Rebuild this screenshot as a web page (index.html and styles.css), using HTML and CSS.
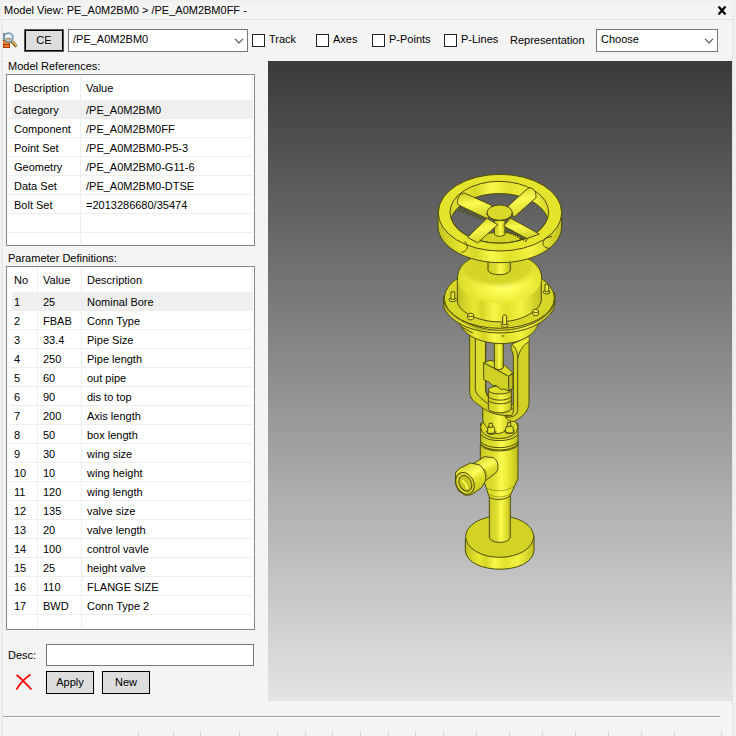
FILE: index.html
```html
<!DOCTYPE html>
<html lang="en">
<head>
<meta charset="utf-8">
<title>Model View</title>
<link rel="stylesheet" href="styles.css">
</head>
<body>
<div class="window">
  <header class="titlebar">
    <span>Model View: PE_A0M2BM0 &gt; /PE_A0M2BM0FF -</span>
    <button class="close" type="button" aria-label="Close">
      <svg width="10" height="9" viewBox="0 0 10 9"><path d="M1.5 .5 8.5 8.5M8.5 .5 1.5 8.5" stroke="#000" stroke-width="2.2"/></svg>
    </button>
  </header>

  <div class="toolbar">
    <svg class="find" width="15" height="18" viewBox="0 0 15 18">
      <path d="M0 8h7v8H0z" fill="#a83a08"/><path d="M0 9h6v3H0zM1 13h5v2H1z" fill="#f0801e"/><path d="M0 1h4v7H0z" fill="#8f8e88"/>
      <path d="m8.500 9 5 5.500" stroke="#6b501c" stroke-width="3.200"/><path d="m9 9 4.500 5" stroke="#e8c05a" stroke-width="1.600"/>
      <circle cx="5.500" cy="5.500" r="4.500" fill="#d3e6f0" stroke="#6f93b0" stroke-width="1.400"/><path d="M2 6h7l-1 2.500H3z" fill="#b9a48b"/><path d="M3 3h4v2H3z" fill="#fff"/>
    </svg>
    <button class="btn ce" type="button">CE</button>
    <span class="drop element"><select aria-label="Element"><option>/PE_A0M2BM0</option></select><svg width="10" height="6" viewBox="0 0 10 6"><path d="m1 .8 4 4 4-4" fill="none" stroke="#555" stroke-width="1.200"/></svg></span>
    <label class="check track"><input type="checkbox"><span>Track</span></label>
    <label class="check axes"><input type="checkbox"><span>Axes</span></label>
    <label class="check points"><input type="checkbox"><span>P-Points</span></label>
    <label class="check lines"><input type="checkbox"><span>P-Lines</span></label>
    <label class="rep" for="representation">Representation</label>
    <span class="drop choose"><select id="representation"><option>Choose</option></select><svg width="10" height="6" viewBox="0 0 10 6"><path d="m1 .8 4 4 4-4" fill="none" stroke="#555" stroke-width="1.200"/></svg></span>
  </div>

  <main class="content">
    <section class="side">
      <h2 id="refs">Model References:</h2>
      <div class="box">
        <table class="refs" aria-labelledby="refs">
          <thead><tr><th>Description</th><th>Value</th></tr></thead>
          <tbody>
            <tr class="selected"><td>Category</td><td>/PE_A0M2BM0</td></tr>
            <tr><td>Component</td><td>/PE_A0M2BM0FF</td></tr>
            <tr><td>Point Set</td><td>/PE_A0M2BM0-P5-3</td></tr>
            <tr><td>Geometry</td><td>/PE_A0M2BM0-G11-6</td></tr>
            <tr><td>Data Set</td><td>/PE_A0M2BM0-DTSE</td></tr>
            <tr><td>Bolt Set</td><td>=2013286680/35474</td></tr>
            <tr><td></td><td></td></tr>
            <tr class="rest"><td></td><td></td></tr>
          </tbody>
        </table>
      </div>
      <h2 id="params" class="second">Parameter Definitions:</h2>
      <div class="box">
        <table class="params" aria-labelledby="params">
          <thead><tr><th>No</th><th>Value</th><th>Description</th></tr></thead>
          <tbody>
            <tr class="selected"><td>1</td><td>25</td><td>Nominal Bore</td></tr>
            <tr><td>2</td><td>FBAB</td><td>Conn Type</td></tr>
            <tr><td>3</td><td>33.4</td><td>Pipe Size</td></tr>
            <tr><td>4</td><td>250</td><td>Pipe length</td></tr>
            <tr><td>5</td><td>60</td><td>out pipe</td></tr>
            <tr><td>6</td><td>90</td><td>dis to top</td></tr>
            <tr><td>7</td><td>200</td><td>Axis length</td></tr>
            <tr><td>8</td><td>50</td><td>box length</td></tr>
            <tr><td>9</td><td>30</td><td>wing size</td></tr>
            <tr><td>10</td><td>10</td><td>wing height</td></tr>
            <tr><td>11</td><td>120</td><td>wing length</td></tr>
            <tr><td>12</td><td>135</td><td>valve size</td></tr>
            <tr><td>13</td><td>20</td><td>valve length</td></tr>
            <tr><td>14</td><td>100</td><td>control vavle</td></tr>
            <tr><td>15</td><td>25</td><td>height valve</td></tr>
            <tr><td>16</td><td>110</td><td>FLANGE SIZE</td></tr>
            <tr><td>17</td><td>BWD</td><td>Conn Type 2</td></tr>
            <tr class="rest last"><td></td><td></td><td></td></tr>
          </tbody>
        </table>
      </div>
      <form class="edit">
        <label for="desc">Desc:</label>
        <input id="desc" type="text">
        <button class="delete" type="button" aria-label="Delete"><svg width="18" height="18" viewBox="0 0 18 18"><path d="M1.500 1C6 4 10 9 16.500 15.500M15.500 .5C11 3.500 5 9.500 1.500 15.500" fill="none" stroke="#f00" stroke-width="1.700"/></svg></button>
        <div class="actions"><button class="btn" type="button">Apply</button><button class="btn" type="button">New</button></div>
      </form>
    </section>

    <section class="viewer" aria-label="3D model">
      <svg class="model" viewBox="0 0 464 640" role="img" aria-label="Control valve with handwheel">
        <defs>
          <linearGradient id="cyl"><stop offset="0" stop-color="#c4c422"/><stop offset=".14" stop-color="#d6d628"/><stop offset=".34" stop-color="#dcdc2c"/><stop offset=".56" stop-color="#fbfb50"/><stop offset=".78" stop-color="#e1e12c"/><stop offset="1" stop-color="#c0c020"/></linearGradient>
          <linearGradient id="wide"><stop offset="0" stop-color="#c2c221"/><stop offset=".2" stop-color="#e8e82f"/><stop offset=".3" stop-color="#d6d627"/><stop offset=".43" stop-color="#f8f848"/><stop offset=".58" stop-color="#e2e22c"/><stop offset=".76" stop-color="#f2f240"/><stop offset="1" stop-color="#c2c221"/></linearGradient>
          <linearGradient id="nozzle" x1=".2" y1="0" x2=".7" y2="1"><stop offset="0" stop-color="#c8c823"/><stop offset=".4" stop-color="#ffff5c"/><stop offset=".6" stop-color="#e0e02b"/><stop offset="1" stop-color="#c0c020"/></linearGradient>
          <linearGradient id="arm" x1=".4" y1="0" x2=".6" y2="1"><stop offset="0" stop-color="#d2d226"/><stop offset=".4" stop-color="#fbfb50"/><stop offset="1" stop-color="#cccc24"/></linearGradient>
          <radialGradient id="dome" cx=".55" cy=".62" r=".62"><stop offset="0" stop-color="#ffff90"/><stop offset=".25" stop-color="#fcfc58"/><stop offset=".6" stop-color="#ebeb36"/><stop offset="1" stop-color="#d4d427"/></radialGradient>
          <radialGradient id="domeTop" cx=".5" cy=".35" r=".62"><stop offset="0" stop-color="#d2d226"/><stop offset=".7" stop-color="#d6d628"/><stop offset="1" stop-color="#f2f240" stop-opacity="0"/></radialGradient>
        </defs>

        <!-- base flange, pipe, body and side nozzle -->
        <g class="part" transform="translate(177 359) scale(.3333)">
          <path d="M61 355v38c8 72 197 74 206 0v-46z" fill="url(#wide)"/>
          <ellipse cx="164" cy="350" rx="102" ry="62" fill="#d3d326"/>
          <path d="M133 223v130c7 19 56 19 63 0V223z" fill="url(#cyl)"/>
          <path d="M106 72v79l27 81c18 10 47 8 62-4l24-52V62z" fill="url(#cyl)"/>
          <path d="M124 204c25 12 60 12 86-7M133 223c18 12 47 10 62-1" class="thin"/>
          <path d="m84 132 34-22 27 3c12 7 16 22 13 37l-6 9-36 28z" fill="url(#nozzle)"/>
          <path d="m98 138 22 12 8 22" class="thin"/>
          <path d="m32 158 10-12 34-17 26 5c14 9 22 27 20 48l-13 22-30 20-18 2-20-13-10-22z" fill="url(#nozzle)"/>
          <ellipse cx="60" cy="190" rx="26" ry="34" transform="rotate(-27 60 190)" fill="#e0e02b"/>
          <ellipse cx="61" cy="190" rx="18" ry="25" transform="rotate(-27 61 190)" fill="#c4c422"/>
          <path d="M51 181c8 6 14 15 16 26" stroke="#f6f650" stroke-width="6" fill="none"/>
          <path d="M107 10v65c16 24 95 24 112 0V10z" fill="url(#cyl)"/>
          <path d="M107 43c18 25 94 25 112 0M107 65c18 24 94 24 112 0M107 72c18 24 94 24 112 0" class="line"/>
          <ellipse cx="163" cy="22" rx="56" ry="34" fill="#d8d829"/>
        </g>

        <!-- yoke, stem, clamp block and gland -->
        <g class="part" transform="translate(177 269) scale(.3333)">
          <path d="M113 230v36c0 20 15 22 20 39 13 8 35 8 48-3 2-20 20-22 19-38v-34z" fill="url(#cyl)"/>
          <path d="M74 15v173c3 26 23 32 42 48 31 21 63 22 100 20l5-38c-48 14-77-1-94-23-4-9-5-13-5-22V35z" fill="#d2d226"/>
          <path d="M94 28v155l24 21V36z" fill="#dcdc2a" stroke="none"/>
          <path d="M122 35v135c0 18 3 27 15 38M91 25v154c2 14 18 28 38 42 20 16 45 19 74 15" class="line"/>
          <path d="M130 178v60c13 14 54 14 69 0v-60z" fill="url(#cyl)"/>
          <path d="M130 200c12 14 58 14 69 0M130 211c12 14 58 14 69 0" class="line"/>
          <ellipse cx="164" cy="180" rx="34" ry="12" fill="#dede2b"/>
          <path d="M148 35v78c5 8 21 8 27 0V30z" fill="url(#cyl)"/>
          <path d="m116 98 19-7 13 3v19c5 8 21 8 27 0v-11l28 26-12 11z" fill="#dcdc2a"/>
          <path d="m116 98 75 41v44l-14-6-8 2-17-13-9 1-10-10-17-8z" fill="#d0d025"/>
          <path d="m191 139 13-8v43l-13 9z" fill="#bdbd20"/>
          <path d="M201 43c12-4 35-16 51-22v204c-7 27-28 40-43 49-15 2-24-5-29-15 17-2 25-1 25-18V84c0-24-13-28-4-41z" fill="#d0d025"/>
          <path d="m204 43 47-23v16c-18 11-29 29-32 48-4-12-6-28-15-41z" fill="#ebeb36" stroke="none"/>
          <path d="M201 43c12 10 17 24 17 44v152c0 15-11 23-35 23M252 35c-18 10-30 28-33 49" class="line"/>
          <g fill="#e7e730"><path d="m128 296 4-8h13l4 8v14h-21zM182 295l4-8h13l6 8v14h-23z"/><path d="M132 292v-12h10v12zM188 290v-12h9v12z"/></g>
          <path d="M123 303c5 14 30 14 30 0M178 301c4 13 29 13 30 0" class="line"/>
        </g>

        <!-- actuator housing -->
        <g class="part" transform="translate(157 189) scale(.3333)">
          <path d="M104 220c15 38 62 59 124 61 61 0 104-29 112-60l5-31H104z" fill="url(#wide)"/>
          <path d="M56 138v30c4 23 33 47 64 61 83 34 198 26 254-35 10-10 16-22 16-41v-23z" fill="url(#wide)"/>
          <path d="M57 155c10 37 60 64 103 76 71 22 149 4 194-28 18-13 33-31 35-51" class="line"/>
          <path d="M60 160c18 45 72 72 121 80 75 10 148-15 184-47" class="thin"/>
          <ellipse cx="223" cy="144" rx="165" ry="91" fill="#d7d728"/>
          <path d="M97 83v72c2 16 18 29 36 40 56 28 128 27 178-1 22-12 36-26 38-43V80z" fill="url(#wide)"/>
          <path d="M98 86c0-42 45-76 125-78 79 0 126 33 126 76 0 43-52 74-126 75-73-1-125-30-125-73z" fill="url(#dome)" stroke="none"/>
          <ellipse cx="215" cy="66" rx="112" ry="56" fill="url(#domeTop)" stroke="none"/>
          <path d="M97 90c-2-48 42-80 126-82 79 1 130 35 127 78" class="line"/>
          <g fill="#eded37">
            <ellipse cx="83" cy="149" rx="11" ry="6"/><path d="M78 126h11v22H78z"/>
            <ellipse cx="365" cy="126" rx="10" ry="6"/><path d="M360 103h11v22h-11z"/>
            <ellipse cx="239" cy="226" rx="11" ry="6"/><path d="M233 198c2-4 10-4 12 0v26h-12z"/>
            <path d="M128 194c3-6 15-6 18 0v12c-3 5-15 5-18 0zM323 182c3-6 15-6 18 0v11c-3 5-15 5-18 0z"/>
          </g>
          <path d="M128 196c3 5 15 5 18 0M323 184c3 5 15 5 18 0M230 258h8M110 231l33 18" class="line"/>
          <path d="M189 32v30c8 16 58 16 67 0V32z" fill="url(#cyl)"/>
        </g>

        <!-- handwheel -->
        <g class="part" transform="translate(157 104) scale(.3333)">
          <path d="M162 218c22-22 102-22 125 0l-6 30H170z" fill="#d3d326"/>
          <path d="M208 165v43c6 8 25 8 32 0v-43z" fill="url(#cyl)"/>
          <path fill-rule="evenodd" d="M39 145c3-70 87-116 186-117 101 1 183 48 185 117v41c-3 65-90 107-185 107S42 248 39 187zM78 160a148 93 0 0 0 290 0 148 93 0 0 0-290 0z" fill="url(#wide)"/>
          <path fill-rule="evenodd" d="M40 143a185 115 0 1 1 370 0 185 115 0 0 1-370 0zM75 142a148 93 0 1 0 296 0 148 93 0 0 0-296 0z" fill="#e4e42d"/>
          <path d="M109 262c20-3 24-18 10-33M375 251c-20-3-25-14-19-23 3-9 14-11 25-14" class="line"/>
          <path d="m104 130 80 32M242 190l66 34" class="teeth"/>
          <path d="M99 119c-5-16 3-34 19-35l82 37-12 41z" fill="url(#arm)"/>
          <path d="m249 124 59-54c10-5 27 3 25 28l-66 59z" fill="url(#arm)"/>
          <path d="m186 160 32 19-60 55-30-17z" fill="url(#arm)"/>
          <path d="m256 159 87 48-37 14-70-38z" fill="url(#arm)"/>
          <ellipse cx="224" cy="143" rx="38" ry="23" fill="#d8d829"/>
          <path d="M186 143c0 13 16 24 38 24s38-11 38-24" class="line"/>
        </g>
      </svg>
    </section>
  </main>

  <footer class="status">
    <span></span><span></span><span></span><span></span><span></span><span></span><span></span><span></span><span></span><span></span>
    <span></span><span></span><span></span><span></span><span></span><span></span><span></span><span></span><span></span><span></span>
  </footer>
</div>
</body>
</html>
```
FILE: styles.css
```css
* { box-sizing: border-box; }

body {
  margin: 0;
  background: #f0f0f0;
  color: #000;
  font: 11px/13px "Liberation Sans", Arial, sans-serif;
}

button, input, select { font: inherit; color: inherit; margin: 0; }
button { padding: 0; }

.window {
  display: flex;
  flex-direction: column;
  min-height: 100vh;
  margin: 0 3px 0 2px;
  padding-top: 2px;
}

.titlebar {
  display: flex;
  justify-content: space-between;
  align-items: center;
  height: 17px;
  padding: 0 6px 0 2px;
  background: #f4f4f4;
}

.close { display: flex; border: 0; background: none; }

.toolbar {
  display: flex;
  align-items: center;
  height: 42px;
  background: #f4f4f4;
  border: 1px dotted #d4d4d4;
  border-bottom: 0;
}

.find { flex: none; margin-right: 6px; }

.btn {
  width: 48px;
  height: 23px;
  background: #ddd;
  border: 1px solid #000;
}

.ce {
  width: 40px;
  border-color: #555;
  box-shadow: inset 0 0 0 1px #000;
}

.drop { position: relative; height: 23px; }

.drop select {
  appearance: none;
  width: 100%;
  height: 23px;
  padding: 0 20px 2px 4px;
  background: #fff;
  border: 1px solid #777;
  border-radius: 0;
}

.drop svg {
  position: absolute;
  right: 4px;
  top: 9px;
  pointer-events: none;
}

.element { width: 180px; margin: 0 4px; }
.choose { width: 122px; }

.check { display: flex; align-items: center; gap: 4px; white-space: nowrap; }
.check span { padding-bottom: 2px; }

.check input {
  appearance: none;
  width: 13px;
  height: 13px;
  background: #fff;
  border: 1px solid #222;
}

.track { width: 64px; }
.axes { width: 56px; }
.points { width: 72px; }
.lines { width: 66px; }
.rep { width: 86px; }

.content {
  display: grid;
  grid-template-columns: 265px 1fr;
  background: #f4f4f4;
  border: 1px dotted #d4d4d4;
  border-width: 0 1px;
}

.side { padding: 0 13px 0 3px; }

h2 {
  height: 13px;
  margin: 0;
  padding-left: 2px;
  font-size: 11px;
  font-weight: normal;
  line-height: 11px;
}

.second { margin-top: 7px; }

.box {
  padding: 1px;
  background: #fff;
  border: 1px solid #828790;
}

table {
  width: 100%;
  border-collapse: separate;
  border-spacing: 0;
  table-layout: fixed;
}

th, td {
  padding: 0 0 0 5px;
  font-weight: normal;
  text-align: left;
  border-right: 1px solid #eee;
}

th:first-child, td:first-child { padding-left: 6px; }
th { height: 24px; }
td { height: 19px; padding-top: 2px; border-bottom: 1px solid #eee; }
td:last-child { border-right: 0; }
.selected td { background: #efefef; }
.selected td:first-child { background: linear-gradient(90deg, #fff 4px, #efefef 4px); }
.rest td { height: 11px; border-bottom: 0; }
.last td { height: 13px; }
.refs th:first-child { width: 73px; }
.params th:first-child { width: 30px; }
.params th:nth-child(2) { width: 44px; }

.edit {
  display: grid;
  grid-template-columns: 36px 1fr;
  gap: 5px 2px;
  align-items: center;
  padding: 14px 1px 7px 2px;
}

.edit input {
  width: 100%;
  height: 22px;
  border: 1px solid #777;
}

.delete {
  display: flex;
  justify-content: center;
  padding-right: 4px;
  background: none;
  border: 0;
}

.actions { display: flex; gap: 8px; }

.viewer {
  display: flex;
  background: linear-gradient(#3a3a3a, #e4e4e4);
}

.model { width: 100%; }

.part { stroke: #4c4c0c; stroke-width: 3; stroke-linejoin: round; }
.line { fill: none; }
.thin { fill: none; stroke: #85851a; stroke-width: 2; }
.teeth { fill: none; stroke: #4c4c0c; stroke-width: 18; stroke-dasharray: 3 4; }

.status {
  flex: 1;
  display: grid;
  grid-template-columns: 135px 35px 27px 39px 38px 28px 27px 28px 28px 27px 28px repeat(7, 33px) 47px 1fr;
  min-height: 35px;
  padding-top: 30px;
  background: linear-gradient(90deg, #a0a0a0 717px, #f4f4f4 717px) 0 15px / 100% 1px no-repeat,
    linear-gradient(90deg, #fff 717px, #f4f4f4 717px) 0 16px / 100% 1px no-repeat,
    #f4f4f4;
  border: 1px dotted #d4d4d4;
  border-width: 0 1px;
}

.status span + span { border-left: 1px solid #dadada; }
```
